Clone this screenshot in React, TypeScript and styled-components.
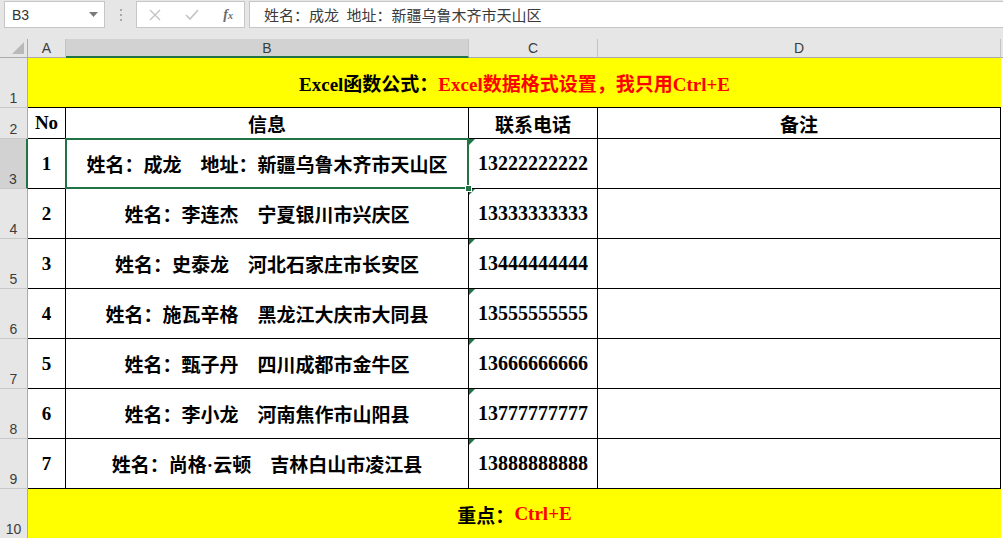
import React from 'react';
import styled, { createGlobalStyle, css } from 'styled-components';

const GREEN = '#217346';
const HEADER_BG = '#e6e6e6';
const HEADER_SEL = '#d2d2d2';
const HEADER_LINE = '#ababab';
const CELL_FONT = `'Liberation Serif', 'Noto Sans CJK SC', serif`;
const UI_FONT = `'Liberation Sans', 'Noto Sans CJK SC', sans-serif`;

type Row = { no: number; info: string; phone: string };

const rows: Row[] = [
  { no: 1, info: '姓名：成龙\u3000地址：新疆乌鲁木齐市天山区', phone: '13222222222' },
  { no: 2, info: '姓名：李连杰\u3000宁夏银川市兴庆区', phone: '13333333333' },
  { no: 3, info: '姓名：史泰龙\u3000河北石家庄市长安区', phone: '13444444444' },
  { no: 4, info: '姓名：施瓦辛格\u3000黑龙江大庆市大同县', phone: '13555555555' },
  { no: 5, info: '姓名：甄子丹\u3000四川成都市金牛区', phone: '13666666666' },
  { no: 6, info: '姓名：李小龙\u3000河南焦作市山阳县', phone: '13777777777' },
  { no: 7, info: '姓名：尚格·云顿\u3000吉林白山市凌江县', phone: '13888888888' },
];

const columns = ['A', 'B', 'C', 'D'];

function App() {
  return (
    <>
      <GlobalStyle />
      <Page>
        <FormulaBar>
          <NameBox>
            B3
            <svg width="9" height="5" viewBox="0 0 9 5">
              <polygon points="0,0 9,0 4.5,5" fill="#7a7a7a" />
            </svg>
          </NameBox>
          <Grip>
            <i />
            <i />
            <i />
          </Grip>
          <ButtonGroup>
            <svg width="12" height="12" viewBox="0 0 12 12">
              <path d="M1 1 L11 11 M11 1 L1 11" stroke="#c3c3c3" strokeWidth="1.4" />
            </svg>
            <svg width="14" height="12" viewBox="0 0 14 12">
              <path d="M1 6 L5 10 L13 1" stroke="#c3c3c3" strokeWidth="1.6" fill="none" />
            </svg>
            <Fx>
              f<sub>x</sub>
            </Fx>
          </ButtonGroup>
          <FormulaInput>姓名：成龙{'\u2002'}地址：新疆乌鲁木齐市天山区</FormulaInput>
        </FormulaBar>

        <Sheet>
          <Corner>
            <svg width="12" height="12" viewBox="0 0 12 12">
              <polygon points="12,0 12,12 0,12" fill="#b9b9b9" />
            </svg>
          </Corner>
          {columns.map((c) => (
            <ColHeader key={c} selected={c === 'B'}>
              {c}
            </ColHeader>
          ))}
          <HeaderFiller />

          <RowHeader>1</RowHeader>
          <Banner bordered>
            Excel函数公式：<Red>Excel数据格式设置，我只用Ctrl+E</Red>
          </Banner>
          <Filler />

          <RowHeader>2</RowHeader>
          <Cell>No</Cell>
          <Cell>信息</Cell>
          <Cell>联系电话</Cell>
          <Cell>备注</Cell>
          <Filler />

          {rows.map((r, i) => (
            <React.Fragment key={r.no}>
              <RowHeader selected={i === 0}>{i + 3}</RowHeader>
              <Cell>{r.no}</Cell>
              <Cell>
                {r.info}
                {i === 0 && (
                  <Selection>
                    <Handle />
                  </Selection>
                )}
              </Cell>
              <Cell variant="text-number">{r.phone}</Cell>
              <Cell />
              <Filler />
            </React.Fragment>
          ))}

          <RowHeader>10</RowHeader>
          <Banner>
            重点：<Red>Ctrl+E</Red>
          </Banner>
          <Filler />
        </Sheet>
      </Page>
    </>
  );
}

const GlobalStyle = createGlobalStyle`
  html, body {
    margin: 0;
    padding: 0;
    background: #ffffff;
    overflow: hidden;
  }
  * {
    box-sizing: border-box;
  }
`;

const Page = styled.div`
  width: 1003px;
  height: 538px;
  overflow: hidden;
  font-family: ${UI_FONT};
`;

const FormulaBar = styled.div`
  display: flex;
  align-items: flex-start;
  height: 39px;
  padding: 1px 0 0 4px;
  background: ${HEADER_BG};
`;

const NameBox = styled.div`
  width: 101px;
  height: 27px;
  display: flex;
  align-items: center;
  justify-content: space-between;
  padding: 0 6px 0 7px;
  background: #ffffff;
  border: 1px solid #c6c6c6;
  font-size: 14px;
  color: #333333;
`;

const Grip = styled.div`
  width: 31px;
  height: 27px;
  display: flex;
  flex-direction: column;
  align-items: center;
  justify-content: center;
  gap: 3px;

  i {
    width: 2px;
    height: 2px;
    background: #a9a9a9;
  }
`;

const ButtonGroup = styled.div`
  width: 109px;
  height: 27px;
  display: flex;
  align-items: center;
  justify-content: space-between;
  padding: 0 11px 0 12px;
  background: #ffffff;
  border: 1px solid #c6c6c6;
`;

const Fx = styled.span`
  font-family: 'Liberation Serif', serif;
  font-style: italic;
  font-weight: bold;
  font-size: 14px;
  color: #6a6a6a;

  sub {
    font-size: 10px;
    vertical-align: baseline;
  }
`;

const FormulaInput = styled.div`
  flex: 1;
  height: 27px;
  margin-left: 4px;
  display: flex;
  align-items: center;
  padding-left: 14px;
  background: #ffffff;
  border: 1px solid #c6c6c6;
  border-right: none;
  font-family: 'Noto Sans CJK SC', sans-serif;
  font-size: 15px;
  color: #3a3a3a;
  white-space: pre;
`;

const Sheet = styled.div`
  display: grid;
  grid-template-columns: 28px 38px 403px 129px 403px 1fr;
  grid-template-rows: 19px 50px 31px repeat(7, 50px) 50px;
`;

const headerText = css`
  display: flex;
  justify-content: center;
  font-family: ${UI_FONT};
  font-size: 14px;
  color: #3c3c3c;
`;

const Corner = styled.div`
  display: flex;
  align-items: flex-end;
  justify-content: flex-end;
  padding: 0 3px 3px 0;
  background: ${HEADER_BG};
  border-right: 1px solid ${HEADER_LINE};
  border-bottom: 1px solid ${HEADER_LINE};
`;

type SelectableProps = { selected?: boolean };

const ColHeader = styled.div<SelectableProps>`
  ${headerText}
  align-items: center;
  background: ${(p) => (p.selected ? HEADER_SEL : HEADER_BG)};
  border-right: 1px solid #c4c4c4;
  border-bottom: ${(p) => (p.selected ? `2px solid ${GREEN}` : `1px solid ${HEADER_LINE}`)};
`;

const HeaderFiller = styled.div`
  background: ${HEADER_BG};
  border-bottom: 1px solid ${HEADER_LINE};
`;

const RowHeader = styled.div<SelectableProps>`
  ${headerText}
  align-items: flex-end;
  padding-bottom: 1px;
  background: ${(p) => (p.selected ? HEADER_SEL : HEADER_BG)};
  border-right: ${(p) => (p.selected ? `2px solid ${GREEN}` : `1px solid ${HEADER_LINE}`)};
  border-bottom: 1px solid #c8c8c8;
`;

const Filler = styled.div`
  background: #ffffff;
`;

const Banner = styled.div<{ bordered?: boolean }>`
  grid-column: span 4;
  display: flex;
  align-items: center;
  justify-content: center;
  background: #ffff00;
  border-bottom: ${(p) => (p.bordered ? '1px solid #000000' : 'none')};
  font-family: ${CELL_FONT};
  font-weight: bold;
  font-size: 19px;
  color: #000000;
`;

const Red = styled.span`
  color: #ff0000;
`;

const Cell = styled.div<{ variant?: 'text-number' }>`
  position: relative;
  display: flex;
  align-items: center;
  justify-content: center;
  white-space: pre;
  background: #ffffff;
  border-right: 1px solid #000000;
  border-bottom: 1px solid #000000;
  font-family: ${CELL_FONT};
  font-weight: bold;
  font-size: ${(p) => (p.variant === 'text-number' ? '20px' : '19px')};
  color: #000000;

  ${(p) =>
    p.variant === 'text-number' &&
    css`
      &::before {
        content: '';
        position: absolute;
        top: 0;
        left: 0;
        border-top: 6px solid ${GREEN};
        border-right: 6px solid transparent;
      }
    `}
`;

const Selection = styled.span`
  position: absolute;
  inset: -1px;
  border: 2px solid ${GREEN};
  z-index: 2;
  pointer-events: none;
`;

const Handle = styled.span`
  position: absolute;
  right: -5px;
  bottom: -5px;
  width: 7px;
  height: 7px;
  background: ${GREEN};
  border: 1px solid #ffffff;
`;

export default App;
